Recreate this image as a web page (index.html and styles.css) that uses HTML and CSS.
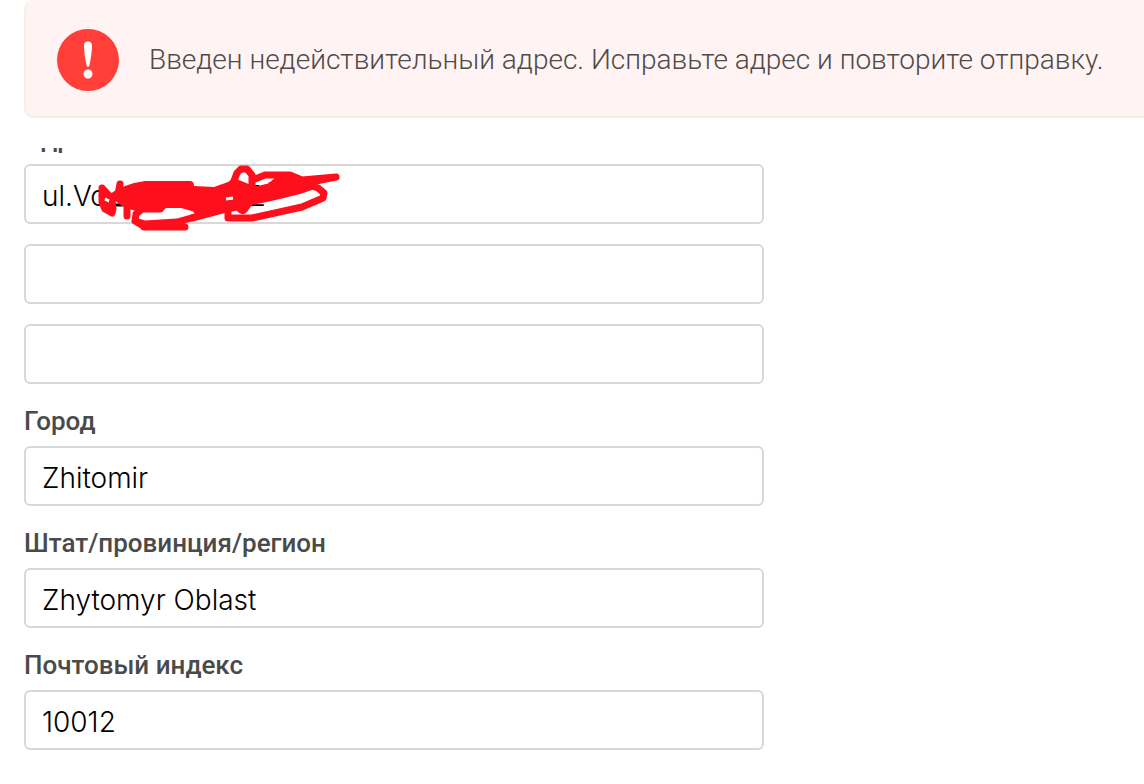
FILE: index.html
```html
<!DOCTYPE html>
<html lang="ru">
<head>
	<meta charset="utf-8">
	<meta name="viewport" content="width=device-width, initial-scale=1">
	<title>Адрес</title>
	<link rel="stylesheet" href="styles.css">
</head>
<body>
	<div class="notice">
		<div class="alert" role="alert">
			<svg class="alert-icon" viewBox="0 0 62 62" aria-hidden="true">
				<circle cx="31" cy="31" r="31" fill="#ff3f38"/>
				<path d="M27 16.500C27 14 28.500 12.500 31 12.500s4 1.500 4 4c0 6-1.200 14-2.500 19.500-.5 2.400-2.500 2.400-3 0C28.200 30.500 27 22.500 27 16.500z" fill="#fff"/>
				<circle cx="31" cy="45" r="4.500" fill="#fff"/>
			</svg>
			<p class="alert-text">Введен недействительный адрес. Исправьте адрес и повторите отправку.</p>
		</div>
	</div>

	<form class="form">
		<div class="field">
			<label class="label" for="address1">Адрес</label>
			<div class="marked">
				<input class="input" type="text" id="address1" value="ul.Vo&nbsp;&nbsp;&nbsp;&nbsp;&nbsp;&nbsp;&nbsp;&nbsp;&nbsp;&nbsp;&nbsp;&nbsp;&nbsp;&nbsp;&nbsp;&nbsp;&nbsp;&nbsp;2">
				<svg class="scribble" viewBox="94 164 250 70" aria-hidden="true">
					<path class="scrap" d="M116 205h7"/>
					<path class="blob" d="M113 192L122 187 134 183 145 181H190Q194 181 194 186L214 187 228 182 234 178 251 185 258 186 270 182 280 174 300 177 316 180 318 188 300 194 280 199 262 203 252 205 247 212Q242 217 237 211L234 206 212 213 195 212 181 208H166L162 212H141L132 210 122 206 114 200z"/>
					<path class="line" d="M102 188v14l3 7 7 4 1-4-1-10-8-9M120 184l-2 10-8 3M104 202l6 9M127 203v13"/>
					<path class="line" d="M160 209h-18l-6 5-1 7 10 3 32-2 43-12M144 227h41M135 221l10 6M197 211l20-4"/>
					<path class="line" d="M232 186l5-13 4-4h6l5 6v10M255 179l10-4h25l12 5 34-3M336 177l-30 6-24 5-36 9-10 10-14 3-30 8"/>
					<path class="line" d="M300 182l18 6 6 5-1 5-21 9-50 11h-24v-10"/>
					<path class="gap" d="M241 175q4-1 5 5M226 199l7-1M105 199l4 2M259 184l9-2"/>
				</svg>
			</div>
			<input class="input" type="text" id="address2" aria-label="Адрес, строка 2">
			<input class="input" type="text" id="address3" aria-label="Адрес, строка 3">
		</div>
		<div class="field">
			<label class="label" for="city">Город</label>
			<input class="input" type="text" id="city" value="Zhitomir">
		</div>
		<div class="field">
			<label class="label" for="region">Штат/провинция/регион</label>
			<input class="input" type="text" id="region" value="Zhytomyr Oblast">
		</div>
		<div class="field">
			<label class="label" for="zip">Почтовый индекс</label>
			<input class="input" type="text" id="zip" value="10012">
		</div>
	</form>
</body>
</html>
```
FILE: styles.css
```css
* {
	box-sizing: border-box;
}
body {
	margin: 0;
	background: #fff;
	font-family: Roboto, "Liberation Sans", sans-serif;
}

/* stays over the form while it scrolls */
.notice {
	position: sticky;
	top: 0;
	z-index: 2;
	padding: 0 0 30px 24px;
	background: #fff;
}
.alert {
	display: flex;
	align-items: center;
	gap: 30px;
	padding: 29px 0 25px 31px;
	border: 2px solid #fbecec;
	border-width: 0 0 2px 2px;
	border-radius: 10px 0 0 10px;
	background: #fff4f3;
}
.alert-icon {
	flex: none;
	width: 62px;
	height: 62px;
}
.alert-text {
	margin: 0;
	color: #4f4a4a;
	font-size: 28px;
	font-weight: 300;
	line-height: 40px;
}

.form {
	display: flex;
	flex-direction: column;
	gap: 20px;
	max-width: 764px;
	margin-top: -26px;
	padding: 0 0 32px 24px;
}
.field {
	display: flex;
	flex-direction: column;
	gap: 20px;
}
.label {
	height: 42px;
	margin-bottom: -20px;
	color: #4a4a4a;
	font-size: 26px;
	font-weight: 500;
	line-height: 34px;
}
.input {
	display: block;
	width: 100%;
	height: 60px;
	padding: 3px 16px 0;
	border: 2px solid #d8d8d8;
	border-radius: 6px;
	background: #fff;
	color: #000;
	font-family: Inter, "Liberation Sans", sans-serif;
	font-size: 28px;
	font-weight: 300;
}

.marked {
	position: relative;
}
.scribble {
	position: absolute;
	top: 0;
	left: 70px;
	width: 250px;
	height: 70px;
	pointer-events: none;
}
.blob {
	fill: #ff0f1c;
}
.line {
	fill: none;
	stroke: #ff0f1c;
	stroke-width: 7;
	stroke-linecap: round;
	stroke-linejoin: round;
}
.gap {
	fill: none;
	stroke: #fff;
	stroke-width: 3;
}
.scrap {
	stroke: #000;
	stroke-width: 3;
}
```
